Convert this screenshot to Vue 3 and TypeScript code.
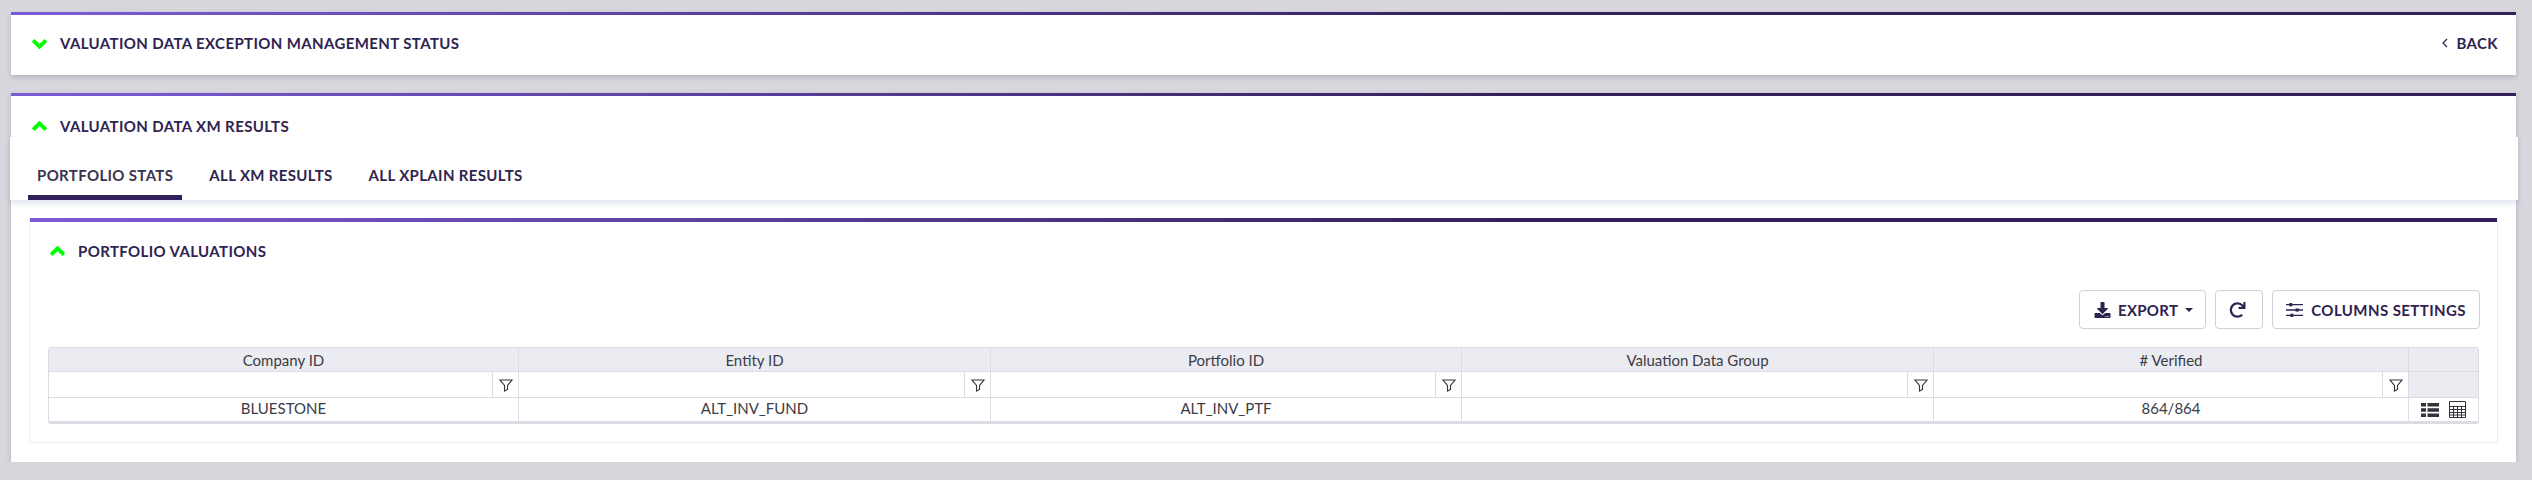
<script setup lang="ts">
const tabs = ['Portfolio Stats', 'All XM Results', 'All Xplain Results']

const columns = [
  { title: 'Company ID', value: 'BLUESTONE' },
  { title: 'Entity ID', value: 'ALT_INV_FUND' },
  { title: 'Portfolio ID', value: 'ALT_INV_PTF' },
  { title: 'Valuation Data Group', value: '' },
  { title: '# Verified', value: '864/864' },
]
</script>

<template>
  <div class="page">
    <section class="panel first">
      <header class="panel-head">
        <svg class="chevron" viewBox="0 0 16 10"><path d="M2 2l6 6 6-6" /></svg>
        <h2>Valuation Data Exception Management Status</h2>
        <a class="back">
          <svg viewBox="0 0 6 10"><path d="M5 1L1 5l4 4" /></svg>
          Back
        </a>
      </header>
    </section>

    <section class="panel second">
      <header class="panel-head">
        <svg class="chevron" viewBox="0 0 16 10"><path d="M2 8l6-6 6 6" /></svg>
        <h2>Valuation Data XM Results</h2>
      </header>

      <nav class="tabs">
        <a v-for="(tab, i) in tabs" :key="tab" class="tab" :class="{ active: i === 0 }">{{ tab }}</a>
      </nav>

      <div class="inner">
        <header class="inner-head">
          <svg class="chevron" viewBox="0 0 16 10"><path d="M2 8l6-6 6 6" /></svg>
          <h3>Portfolio Valuations</h3>
        </header>

        <div class="toolbar">
          <button class="btn export">
            <svg class="btn-icon" viewBox="0 0 512 512"><path d="M216 0h80c13.3 0 24 10.7 24 24v168h87.7c17.8 0 26.7 21.5 14.1 34.1L269.7 378.3c-7.5 7.5-19.8 7.5-27.3 0L90.1 226.1c-12.6-12.6-3.7-34.1 14.1-34.1H192V24c0-13.3 10.7-24 24-24zm296 376v112c0 13.3-10.7 24-24 24H24c-13.3 0-24-10.7-24-24V376c0-13.3 10.7-24 24-24h146.7l49 49c20.1 20.1 52.5 20.1 72.6 0l49-49H488c13.3 0 24 10.7 24 24zm-124 88c0-11-9-20-20-20s-20 9-20 20 9 20 20 20 20-9 20-20zm64 0c0-11-9-20-20-20s-20 9-20 20 9 20 20 20 20-9 20-20z" /></svg>
            Export
            <i class="caret" />
          </button>
          <button class="btn refresh">
            <svg class="btn-icon" viewBox="0 0 512 512"><path d="M500.33 0h-47.41a12 12 0 0 0-12 12.57l4 82.76A247.42 247.42 0 0 0 256 8C119.34 8 7.9 119.53 8 256.19 8.1 393.07 119.1 504 256 504a247.1 247.1 0 0 0 166.18-63.91 12 12 0 0 0 .48-17.43l-34-34a12 12 0 0 0-16.38-.55A176 176 0 1 1 402.1 157.8l-101.53-4.87a12 12 0 0 0-12.57 12v47.41a12 12 0 0 0 12 12h200.33a12 12 0 0 0 12-12V12a12 12 0 0 0-12-12z" /></svg>
          </button>
          <button class="btn columns">
            <svg class="btn-icon sliders" viewBox="0 0 16 14">
              <path class="line" d="M0 2h16M0 7h16M0 12h16" />
              <rect x="3" y="0.5" width="3" height="3" />
              <rect x="9" y="5.5" width="3" height="3" />
              <rect x="4" y="10.5" width="3" height="3" />
            </svg>
            Columns Settings
          </button>
        </div>

        <div class="grid">
          <div class="row head">
            <div v-for="col in columns" :key="col.title" class="cell">{{ col.title }}</div>
            <div class="cell" />
          </div>
          <div class="row filters">
            <div v-for="col in columns" :key="col.title" class="cell filter">
              <span class="filter-input" />
              <span class="filter-btn">
                <svg viewBox="0 0 14 14"><path d="M1 2h12L8.500 7.500V11.500L5.500 13V7.500z" /></svg>
              </span>
            </div>
            <div class="cell blank" />
          </div>
          <div class="row data">
            <div v-for="col in columns" :key="col.title" class="cell value">{{ col.value }}</div>
            <div class="cell actions">
              <svg class="list" viewBox="0 0 18 14">
                <path d="M0 0h5v3.600H0zM6.500 0H18v3.600H6.500zM0 5.200h5v3.600H0zM6.500 5.200H18v3.600H6.500zM0 10.400h5V14H0zM6.500 10.400H18V14H6.500z" />
              </svg>
              <svg class="calc" viewBox="0 0 17 17">
                <path d="M.5.500h16v16H.5zM.5 5.500h16M.5 8.500h16M.5 11.500h16M.5 14h16M4.500 5.500v11M8.500 5.500v11M12.500 5.500v11" />
              </svg>
            </div>
          </div>
        </div>
      </div>
    </section>
  </div>
</template>

<style scoped>
.page {
  padding: 12px 16px 0 11px;
  font-family: Lato, "Open Sans", sans-serif;
  color: #2f2350;
}

.panel {
  position: relative;
  padding-top: 3px;
  box-sizing: border-box;
  background: #fff;
  box-shadow: 0 2px 5px rgba(60, 55, 90, 0.25);
}

.panel::before,
.inner::before {
  content: "";
  position: absolute;
  top: 0;
  left: 0;
  right: 0;
  height: 3px;
  background: linear-gradient(90deg, #7e5bd6, #32215a 60%);
}

.first {
  height: 63px;
  margin-bottom: 18px;
}

.second {
  height: 369px;
}

.panel-head {
  display: flex;
  align-items: center;
  height: 41px;
  padding: 19px 18px 0 20px;
  box-sizing: border-box;
}

.first .panel-head {
  height: 56px;
  padding-top: 0;
}

h2,
h3 {
  margin: 0;
  font-size: 15px;
  font-weight: 700;
  letter-spacing: 0.38px;
  text-transform: uppercase;
}

.chevron {
  width: 17px;
  height: 11px;
  margin-right: 12px;
  fill: none;
  stroke: #00ff00;
  stroke-width: 3.6;
}

.back {
  display: flex;
  align-items: center;
  gap: 8px;
  margin-left: auto;
  font-size: 15px;
  font-weight: 700;
  letter-spacing: 0.4px;
  text-transform: uppercase;
}

.back svg {
  width: 6px;
  height: 10px;
  fill: none;
  stroke: #2f2350;
  stroke-width: 1.2;
}

.tabs {
  position: relative;
  display: flex;
  gap: 18px;
  height: 63px;
  margin: 0 -2px 0 -1px;
  padding-left: 18px;
  box-sizing: border-box;
  background: #fff;
  box-shadow: 0 3px 6px rgba(120, 140, 180, 0.25);
}

.tab {
  height: 63px;
  padding: 18px 9px 0;
  border-bottom: 5px solid transparent;
  box-sizing: border-box;
  font-size: 15px;
  font-weight: 700;
  line-height: 40px;
  letter-spacing: 0.35px;
  text-transform: uppercase;
}

.tab.active {
  color: #3a3350;
  border-bottom-color: #32215a;
}

.inner {
  position: relative;
  margin: 18px 18px 0;
  height: 225px;
  padding: 4px 18px 0;
  border: 1px solid #ecedf1;
  border-top: 0;
  box-sizing: border-box;
}

.inner::before {
  height: 4px;
}

.inner-head {
  display: flex;
  align-items: center;
  height: 58px;
  margin-left: 1px;
}

.toolbar {
  display: flex;
  justify-content: flex-end;
  gap: 9px;
  margin: 10px -1px 0 0;
}

.btn {
  display: flex;
  align-items: center;
  gap: 8px;
  height: 39px;
  padding: 0 13px;
  background: #fff;
  border: 1px solid #cfcfda;
  border-radius: 4px;
  font: 700 15px Lato, sans-serif;
  letter-spacing: 0.3px;
  color: #2f2350;
  text-transform: uppercase;
}

.export {
  gap: 7px;
  padding: 0 12px 0 14px;
}

.columns {
  letter-spacing: 0.42px;
}

.refresh {
  width: 48px;
  justify-content: center;
  padding: 0 4px 0 0;
}

.btn-icon {
  width: 17px;
  height: 16px;
  fill: #2f2350;
}

.sliders .line {
  stroke: #2f2350;
  stroke-width: 1.2;
  fill: none;
}

.caret {
  width: 0;
  height: 0;
  border: 4px solid transparent;
  border-top-color: #2f2350;
  border-bottom: 0;
}

.grid {
  margin-top: 18px;
  border: 1px solid #dcdce3;
  border-bottom-width: 2px;
  border-radius: 3px;
  font-size: 15px;
  color: #3c3c46;
}

.row {
  display: grid;
  grid-template-columns: 470px 472px 471px 472px 475px 1fr;
  height: 26px;
  border-bottom: 1px solid #dcdce3;
  box-sizing: border-box;
}

.head {
  height: 24px;
  background: #ebecf1;
}

.row.data {
  height: 24px;
}

.cell {
  display: flex;
  align-items: center;
  justify-content: center;
  min-width: 0;
  border-right: 1px solid #dcdce3;
}

.cell:last-child {
  border-right: 0;
}

.value {
  padding-bottom: 3px;
  box-sizing: border-box;
}

.filter {
  justify-content: flex-end;
}

.filter-input {
  flex: 1;
}

.filter-btn {
  display: flex;
  align-items: center;
  justify-content: center;
  width: 25px;
  height: 100%;
  border-left: 1px solid #dcdce3;
}

.filter-btn svg {
  width: 14px;
  height: 14px;
  fill: none;
  stroke: #33333d;
  stroke-width: 1.1;
}

.blank {
  background: #ebecf1;
}

.actions {
  justify-content: flex-end;
  gap: 10px;
  padding-right: 12px;
}

.list {
  width: 18px;
  height: 14px;
  fill: #33333d;
}

.calc {
  width: 17px;
  height: 17px;
  fill: none;
  stroke: #33333d;
  stroke-width: 1;
}
</style>

<style>
html,
body {
  background: #d8d7de;
}
</style>
